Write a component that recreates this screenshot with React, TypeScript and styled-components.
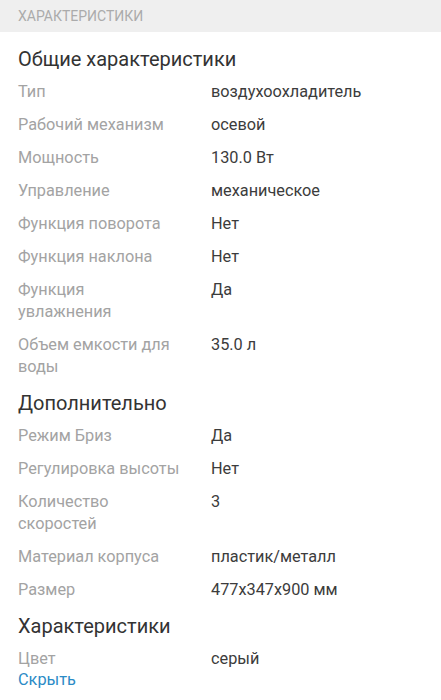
import React from "react";
import styled, { createGlobalStyle } from "styled-components";

const Global = createGlobalStyle`
  html, body { margin: 0; padding: 0; background: #fff; }
  body { font-family: Roboto, "Noto Sans", Arial, sans-serif; -webkit-font-smoothing: antialiased; }
`;

const Page = styled.div`
  width: 441px;
  background: #fff;
`;

const HeaderBar = styled.div`
  height: 32px;
  background: #efefef;
  display: flex;
  align-items: center;
  padding: 0 18px;
  font-size: 14px;
  color: #ababab;
  text-transform: uppercase;
`;

const Content = styled.div`
  padding: 15px 18px 8px;
  display: flex;
  flex-direction: column;
  gap: 13px;
`;

const Section = styled.section`
  display: flex;
  flex-direction: column;
  gap: 10px;
`;

const SectionTitle = styled.h2`
  margin: 0;
  font-size: 20px;
  line-height: 24px;
  font-weight: 400;
  color: #333;
`;

const Rows = styled.div`
  display: flex;
  flex-direction: column;
  gap: 11px;
`;

const Row = styled.div`
  display: grid;
  grid-template-columns: 163px 1fr;
  column-gap: 30px;
  font-size: 16.3px;
  line-height: 22px;
`;

const Label = styled.div`
  color: #a3a3a3;
  white-space: pre-line;
`;

const Value = styled.div`
  color: #3c3c3c;
`;

const HideLink = styled.a`
  display: block;
  font-size: 16.3px;
  line-height: 18px;
  color: #2b8bc6;
  text-decoration: none;
  margin-top: -12px;
`;

type Spec = [string, string];

const sections: { title: string; rows: Spec[] }[] = [
  {
    title: "Общие характеристики",
    rows: [
      ["Тип", "воздухоохладитель"],
      ["Рабочий механизм", "осевой"],
      ["Мощность", "130.0 Вт"],
      ["Управление", "механическое"],
      ["Функция поворота", "Нет"],
      ["Функция наклона", "Нет"],
      ["Функция\nувлажнения", "Да"],
      ["Объем емкости для\nводы", "35.0 л"],
    ],
  },
  {
    title: "Дополнительно",
    rows: [
      ["Режим Бриз", "Да"],
      ["Регулировка высоты", "Нет"],
      ["Количество\nскоростей", "3"],
      ["Материал корпуса", "пластик/металл"],
      ["Размер", "477x347x900 мм"],
    ],
  },
  {
    title: "Характеристики",
    rows: [["Цвет", "серый"]],
  },
];

export default function App() {
  return (
    <Page>
      <Global />
      <HeaderBar>Характеристики</HeaderBar>
      <Content>
        {sections.map((s) => (
          <Section key={s.title}>
            <SectionTitle>{s.title}</SectionTitle>
            <Rows>
              {s.rows.map(([l, v]) => (
                <Row key={l}>
                  <Label>{l}</Label>
                  <Value>{v}</Value>
                </Row>
              ))}
            </Rows>
          </Section>
        ))}
        <HideLink href="#">Скрыть</HideLink>
      </Content>
    </Page>
  );
}
